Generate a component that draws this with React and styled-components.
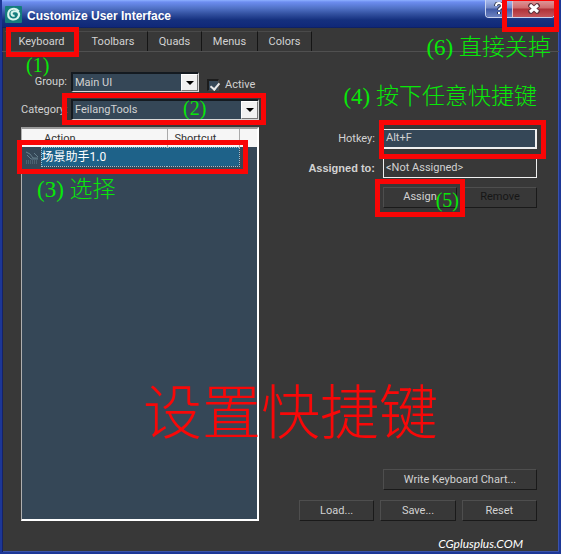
import React from "react";
import styled, { createGlobalStyle } from "styled-components";

const GlobalStyle = createGlobalStyle`
  * { box-sizing: border-box; }
  body { margin: 0; background: #383838; }
  button, input, select, table { font: inherit; color: inherit; }
`;

const Dialog = styled.div`
  min-height: 100vh;
  display: flex;
  flex-direction: column;
  overflow: hidden;
  background: #383838;
  color: #d2d2d2;
  font: 11px/16px Roboto, "Noto Sans CJK SC", sans-serif;
  border: solid #1d3796;
  border-width: 0 2px 2px;
  box-shadow: inset 1px 0 #14226a, inset -1px -1px #3a52aa;
`;

const TitleBar = styled.header`
  display: flex;
  align-items: center;
  height: 28px;
  margin: 0 -2px;
  padding-left: 5px;
  gap: 5px;
  background: linear-gradient(#8db0ff 0, #6d8df0 2px, #5273c8 8px, #32509f 14px, #15307e 20px, #102878 27px, #0b1b57 28px);
  border-radius: 3px 3px 0 0;
`;

const Title = styled.h1`
  flex: 1;
  margin: 0;
  padding-top: 3px;
  color: #fff;
  font: bold 12px/16px "Liberation Sans", sans-serif;
`;

const WindowButtons = styled.div`
  position: relative;
  align-self: flex-start;
  display: flex;
  margin-right: 6px;
  height: 18px;
  border: solid #c9d4f0;
  border-width: 0 1px 1px;
  border-radius: 0 0 4px 4px;
`;

const WindowButton = styled.button`
  display: grid;
  place-items: center;
  width: ${(p) => (p.$close ? 42 : 26)}px;
  padding: 0;
  border: 0;
  border-left: ${(p) => (p.$close ? "1px solid #e3c3cc" : "0")};
  border-radius: ${(p) => (p.$close ? "0 0 3px 0" : "0 0 0 3px")};
  background: ${(p) =>
    p.$close
      ? "linear-gradient(#e09a9c 0, #cf6b6c 8px, #b03238 9px, #c4565c)"
      : "linear-gradient(#a9bdf0, #7287c4 8px, #405aa6 9px, #6c82c0)"};
`;

const TabBar = styled.nav`
  display: flex;
  height: 24px;
  padding: 3px 0 0 3px;
  border-bottom: 1px solid #505050;
`;

const Tab = styled.button`
  position: relative;
  padding: 0;
  width: ${(p) => p.$width}px;
  border: 0;
  border-top: 1px solid #4a4a4a;
  border-right: 1px solid ${(p) => (p["aria-current"] ? "#383838" : "#151515")};
  background: #383838;
  white-space: nowrap;
`;

const Content = styled.main`
  flex: 1;
  display: grid;
  grid-template-columns: 1fr 1fr;
  gap: 40px;
  padding: 20px 22px 0 19px;
`;

const ListPane = styled.section`
  display: flex;
  flex-direction: column;
  gap: 7px;
  min-width: 0;
`;

const Filters = styled.div`
  display: grid;
  grid-template-columns: 46px 128px 1fr;
  grid-template-rows: 20px 21px;
  align-items: center;
  gap: 7px 4px;
`;

const FieldLabel = styled.label`
  text-align: right;
  white-space: nowrap;
  font: ${(p) => (p.$strong ? 'bold 11px/16px "Liberation Sans", sans-serif' : "inherit")};
`;

const SelectBox = styled.div`
  position: relative;
  display: flex;
  height: 100%;
  grid-column: ${(p) => (p.$wide ? "span 2" : "auto")};
  background: #354757;
  border: solid;
  border-width: 2px 1px 1px 2px;
  border-color: #141a20 #d8d8d8 #d8d8d8 #141a20;
`;

const Select = styled.select`
  flex: 1;
  min-width: 0;
  padding: 0 2px;
  border: 0;
  background: transparent;
  appearance: none;
`;

const Arrow = styled.span`
  display: grid;
  place-items: center;
  width: 17px;
  background: #f1f1f1;
  border: solid;
  border-width: 1px;
  border-color: #fff #777 #777 #fff;
  pointer-events: none;
  &::after {
    content: "";
    border: 4px solid transparent;
    border-top-color: #000;
    border-bottom: 0;
  }
`;

const CheckLabel = styled.label`
  display: flex;
  align-items: center;
  gap: 6px;
  padding: 6px 0 0 4px;
`;

const Checkbox = styled.input`
  appearance: none;
  width: 12px;
  height: 12px;
  margin: 0;
  background: #354757;
  border: solid;
  border-width: 2px 1px 1px 2px;
  border-color: #1c1c1c #484848 #484848 #1c1c1c;
  &:checked::after {
    content: "";
    display: block;
    width: 4px;
    height: 7px;
    margin: 0 0 0 3px;
    border: solid #e8e8e8;
    border-width: 0 2px 2px 0;
    transform: rotate(40deg);
  }
`;

const ListBox = styled.div`
  position: relative;
  flex: 1;
  background: #354757;
  border: solid;
  border-width: 2px 2px 2px 1px;
  border-color: #9a9a9a #fff #fff #b0b0b0;
`;

const ActionTable = styled.table`
  width: 100%;
  table-layout: fixed;
  border-collapse: collapse;
  col:nth-child(1) { width: 19px; }
  col:nth-child(2) { width: 126px; }
  col:nth-child(3) { width: 72px; }
`;

const HeadCell = styled.th`
  height: 18px;
  padding: 3px 0 0 ${(p) => p.$indent || 0}px;
  background: #f6f6f6;
  border-right: ${(p) => (p.$divider ? "1px solid #aaa" : "0")};
  color: #333;
  font-size: 11px;
  font-weight: normal;
  line-height: 14px;
  text-align: left;
`;

const ActionRow = styled.tr`
  height: 19px;
`;

const IconCell = styled.td`
  padding: 2px 0 0 3px;
  line-height: 0;
`;

const ActionCell = styled.td`
  padding: 0;
  background: #1e6289;
  border: 1px dotted #9fc0d0;
  color: #fff;
  font-size: 12px;
  line-height: 16px;
`;

const HotkeyPane = styled.section`
  display: flex;
  flex-direction: column;
  min-width: 0;
  padding-top: 57px;
`;

const HotkeyForm = styled.div`
  display: grid;
  grid-template-columns: 76px 1fr;
  grid-auto-rows: 20px;
  align-items: center;
  gap: 9px 8px;
`;

const Wrap = styled.div`
  position: relative;
  display: flex;
  min-width: 0;
  height: 100%;
`;

const TextField = styled.input`
  width: 100%;
  min-width: 0;
  height: 100%;
  padding: 0 2px 2px;
  border: 1px solid #f0f0f0;
  background: ${(p) => (p.readOnly ? "#383838" : "#354757")};
  border-width: ${(p) => (p.readOnly ? "1px" : "1px 2px 2px 1px")};
  outline: 0;
`;

const ButtonRow = styled.div`
  grid-column: ${(p) => (p.$fields ? 2 : "auto")};
  display: grid;
  grid-template-columns: repeat(${(p) => p.$count}, 1fr);
  gap: 6px;
  margin-left: ${(p) => (p.$inset ? 84 : 0)}px;
  height: 21px;
`;

const Button = styled.button`
  width: 100%;
  height: 100%;
  padding: 0 4px;
  background: #383838;
  border: solid;
  border-width: 1px;
  border-color: #4e4e4e #1a1a1a #1a1a1a #4e4e4e;
  white-space: nowrap;
  &:disabled { color: #161616; }
`;

const FileActions = styled.div`
  display: flex;
  flex-direction: column;
  gap: 10px;
  margin-top: auto;
`;

const Footer = styled.footer`
  height: 31px;
  padding: 15px 36px 0 0;
  color: #fff;
  font: italic 12px/16px Lato, sans-serif;
  text-align: right;
`;

const Highlight = styled.span`
  position: absolute;
  z-index: 1;
  inset: ${(p) => p.$inset};
  height: ${(p) => (p.$height ? `${p.$height}px` : "auto")};
  border: 5px solid #fa0505;
  pointer-events: none;
`;

const noteSizes = { small: 20, large: 23, headline: 59 };

const Note = styled.span`
  position: absolute;
  z-index: 2;
  top: ${(p) => p.$top}px;
  left: ${(p) => (p.$left === undefined ? "auto" : `${p.$left}px`)};
  right: ${(p) => (p.$right === undefined ? "auto" : `${p.$right}px`)};
  color: ${(p) => (p.$size === "headline" ? "#f80808" : "#08e808")};
  font: 300 ${(p) => noteSizes[p.$size || "small"]}px/1.2 "Liberation Serif", "Noto Sans CJK SC", serif;
  white-space: nowrap;
  pointer-events: none;
`;

const AppIcon = () => (
  <svg width="17" height="17" viewBox="0 0 16 16" fill="none">
    <rect width="16" height="16" rx="1" fill="#147d7d" />
    <path d="M13 5C10 1 3 2 3 8c0 5 6 6 9 3 3-4 0-7-4-6-3 1-2 5 1 4" stroke="#d9f5ed" strokeWidth="2" />
  </svg>
);

const HelpIcon = () => (
  <svg width="12" height="13" viewBox="0 0 12 13" fill="none">
    <path d="M3 4c0-4 6-4 6 0 0 2-3 2-3 4M6 10v2" stroke="#303850" strokeWidth="4" />
    <path d="M3 4c0-4 6-4 6 0 0 2-3 2-3 4M6 10v2" stroke="#fff" strokeWidth="2" />
  </svg>
);

const CloseIcon = () => (
  <svg width="12" height="11" viewBox="0 0 12 11" fill="none">
    <path d="M1 1l10 9M11 1L1 10" stroke="#61343d" strokeWidth="5" />
    <path d="M2 2l8 7M10 2L2 9" stroke="#fff" strokeWidth="3" />
  </svg>
);

const ActionIcon = () => (
  <svg width="14" height="13" viewBox="0 0 14 13" fill="none" stroke="#657f8d">
    <path d="M1 1l4 2 3 4h5M2 4l4 4h7M9 2l4 4" />
    <path d="M1 10h12M1 12h12" strokeDasharray="1 1" />
  </svg>
);

const tabs = [
  ["Keyboard", 74],
  ["Toolbars", 69],
  ["Quads", 54],
  ["Menus", 56],
  ["Colors", 54],
];

export default function App() {
  return (
    <>
      <GlobalStyle />
      <Dialog role="dialog" aria-labelledby="title">
        <TitleBar>
          <AppIcon />
          <Title id="title">Customize User Interface</Title>
          <WindowButtons>
            <WindowButton aria-label="Help"><HelpIcon /></WindowButton>
            <WindowButton $close aria-label="Close"><CloseIcon /></WindowButton>
            <Highlight $inset="-4px -5px -15px 16px" />
            <Note $size="large" $top={34} $right={3}>(6) 直接关掉</Note>
          </WindowButtons>
        </TitleBar>
        <TabBar>
          {tabs.map(([name, width], i) => (
            <Tab key={name} $width={width} aria-current={i === 0 ? "page" : undefined}>
              {name}
              {i === 0 && <Highlight $inset="-5px -1px -6px 1px" />}
              {i === 0 && <Note $top={21} $left={21}>(1)</Note>}
            </Tab>
          ))}
        </TabBar>
        <Content>
          <ListPane>
            <Filters>
              <FieldLabel htmlFor="group">Group:</FieldLabel>
              <SelectBox>
                <Select id="group"><option>Main UI</option></Select>
                <Arrow />
              </SelectBox>
              <CheckLabel><Checkbox type="checkbox" defaultChecked />Active</CheckLabel>
              <FieldLabel htmlFor="category">Category:</FieldLabel>
              <SelectBox $wide>
                <Select id="category"><option>FeilangTools</option></Select>
                <Arrow />
                <Highlight $inset="-8px -8px -6px -11px" />
                <Note $top={-5} $left={110}>(2)</Note>
              </SelectBox>
            </Filters>
            <ListBox>
              <ActionTable>
                <colgroup><col /><col /><col /><col /></colgroup>
                <thead>
                  <tr>
                    <HeadCell aria-label="Icon" />
                    <HeadCell $indent={3} $divider>Action</HeadCell>
                    <HeadCell $indent={7} $divider>Shortcut</HeadCell>
                    <HeadCell aria-label="Notes" />
                  </tr>
                </thead>
                <tbody>
                  <ActionRow>
                    <IconCell><ActionIcon /></IconCell>
                    <ActionCell colSpan={2}>场景助手1.0</ActionCell>
                    <td />
                  </ActionRow>
                </tbody>
              </ActionTable>
              <Highlight $inset="11px 9px auto -5px" $height={34} />
              <Note $size="large" $top={47} $left={15}>(3) 选择</Note>
              <Note $size="headline" $top={250} $left={121}>设置快捷键</Note>
            </ListBox>
          </ListPane>
          <HotkeyPane>
            <HotkeyForm>
              <FieldLabel htmlFor="hotkey">Hotkey:</FieldLabel>
              <Wrap>
                <TextField id="hotkey" defaultValue="Alt+F" />
                <Highlight $inset="-9px -9px -10px -4px" />
                <Note $size="large" $top={-46} $right={0}>(4) 按下任意快捷键</Note>
              </Wrap>
              <FieldLabel htmlFor="assigned" $strong>Assigned to:</FieldLabel>
              <TextField id="assigned" readOnly value="<Not Assigned>" />
              <ButtonRow $count={2} $fields>
                <Wrap>
                  <Button>Assign</Button>
                  <Highlight $inset="-8px -8px -9px -8px" />
                  <Note $top={1} $right={-2}>(5)</Note>
                </Wrap>
                <Button disabled>Remove</Button>
              </ButtonRow>
            </HotkeyForm>
            <FileActions>
              <ButtonRow $count={1} $inset><Button>Write Keyboard Chart...</Button></ButtonRow>
              <ButtonRow $count={3}>
                <Button>Load...</Button>
                <Button>Save...</Button>
                <Button>Reset</Button>
              </ButtonRow>
            </FileActions>
          </HotkeyPane>
        </Content>
        <Footer>CGplusplus.COM</Footer>
      </Dialog>
    </>
  );
}
